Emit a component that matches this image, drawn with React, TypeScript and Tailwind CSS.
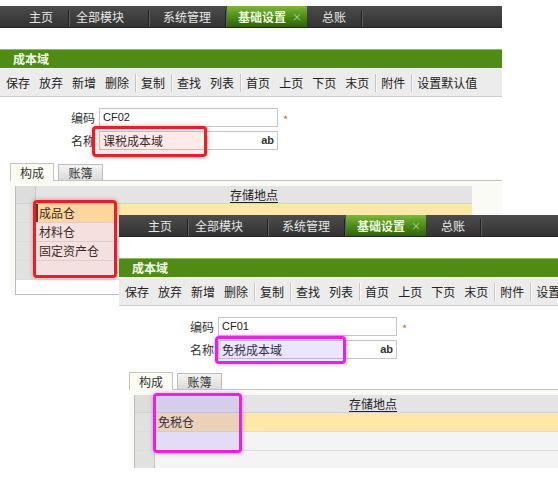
import React from "react";

type Box = { left: number; top: number; width: number; height: number; kind: "red" | "magenta" };

function NavSep() {
  return <div className="w-[2px] h-[17px] self-end border-l border-[#202020] border-r border-r-[#5e5e5e]" />;
}

function NavBar() {
  return (
    <div className="flex h-[22px] items-stretch bg-gradient-to-b from-[#4c4c4c] to-[#333333] border-b border-[#242424] text-[12px] leading-none text-[#e6e6e6]">
      <div className="flex w-[68px] items-center pl-[29px]">主页</div>
      <NavSep />
      <div className="flex w-[78px] items-center pl-[6px]">全部模块</div>
      <NavSep />
      <div className="flex w-[75px] items-center pl-[13px]">系统管理</div>
      <NavSep />
      <div className="flex w-[80px] items-center pl-[11px] bg-gradient-to-b from-[#7cb83c] via-[#4f8d18] to-[#2e620a] font-bold text-[#eef8dc]">
        基础设置
        <span className="ml-[6px] text-[10px] font-normal text-[#b9d996]">×</span>
      </div>
      <div className="flex w-[54px] items-center pl-[15px]">总账</div>
      <NavSep />
    </div>
  );
}

function ToolSep() {
  return <div className="mx-[1px] h-[18px] w-px bg-[#c6c6c6] shadow-[1px_0_0_#fafafa]" />;
}

function Toolbar() {
  const groups = [["保存", "放弃", "新增", "删除"], ["复制"], ["查找", "列表"], ["首页", "上页", "下页", "末页"], ["附件"], ["设置默认值"]];
  return (
    <div className="flex h-[29px] items-center bg-[#ececec] border-t border-[#f6f6f6] border-b border-b-[#cdcdcd] pl-[1.5px] text-[12px] leading-none text-[#222]">
      {groups.map((g, gi) => (
        <React.Fragment key={gi}>
          {gi > 0 && <ToolSep />}
          {g.map((t) => (
            <div key={t} className="px-[4.5px]">
              {t}
            </div>
          ))}
        </React.Fragment>
      ))}
    </div>
  );
}

function Panel({
  code,
  name,
  rows,
  boxes,
  cursor,
}: {
  code: string;
  name: string;
  rows: string[];
  boxes: Box[];
  cursor?: boolean;
}) {
  return (
    <div className="relative w-[502px] pt-[6px]">
      <div className="bg-white">
        <NavBar />
        <div className="mt-[21px] flex h-[19px] items-center border-t border-[#8dbd58] bg-[#4f8c15] pl-[13px] text-[12px] font-bold leading-none text-[#f4faea]">
          成本域
        </div>
        <Toolbar />
        <div className="flex flex-col gap-[4px] pt-[11px] text-[12px] text-[#333]">
          <div className="flex h-[19px] items-center">
            <div className="w-[95px] text-right leading-none">编码</div>
            <div className="ml-[4px] flex h-[19px] w-[179px] items-center border border-[#c6c6c6] bg-white px-[3px] font-['Liberation_Sans',sans-serif] text-[11px] text-[#222]">
              {code}
            </div>
            <div className="ml-[5px] mt-[4px] text-[11px] leading-none text-[#e2601e]">*</div>
          </div>
          <div className="flex h-[19px] items-center">
            <div className="w-[95px] text-right leading-none">名称</div>
            <div className="ml-[4px] flex h-[19px] w-[179px] items-center border border-[#c6c6c6] bg-white px-[3px] text-[12px] text-[#222]">
              <span className="leading-none">{name}</span>
              <span className="ml-auto font-['Liberation_Sans',sans-serif] text-[11px] font-bold leading-none text-[#333]">ab</span>
            </div>
          </div>
        </div>
        <div className="mt-[12px] flex h-[18px] items-end gap-[4px] pl-[10px] text-[12px] leading-none text-[#333]">
          <div className="relative z-10 -mb-px flex h-[18px] w-[44px] items-center justify-center border border-b-0 border-[#c2c2c2] bg-[#fcfcf3]">
            构成
          </div>
          <div className="flex h-[16px] w-[45px] items-center justify-center border border-b-0 border-[#bdbdbd] bg-gradient-to-b from-[#f4f4f4] to-[#dadada]">
            账簿
          </div>
        </div>
        <div className="ml-[10px] h-[115px] border-t border-[#c4c4c4] bg-[#fbfbf6] pl-[5px] pt-[5px]">
          <div className="h-[109px] w-[457px] border-b border-l border-[#bcbcbc] bg-white text-[12px] leading-none text-[#222]">
            <div className="flex h-[18px] border-b border-[#d2d2d2] bg-[#e4e4e4]">
              <div className="w-[20px] border-r border-[#c8c8c8] bg-[#dddddd]" />
              <div className="flex flex-1 items-center justify-center">
                <span className="underline underline-offset-2">存储地点</span>
              </div>
            </div>
            {rows.map((r, i) => (
              <div key={i} className="flex h-[19px] border-b border-[#dddddd]">
                <div className="w-[20px] border-r border-[#c8c8c8] bg-[#e1e1e1]" />
                <div
                  className={
                    i === 0
                      ? "flex flex-1 items-center bg-[#fde7a9] pl-[3px]"
                      : "flex flex-1 items-center bg-[#f4f4f4] pl-[3px]"
                  }
                >
                  {i === 0 && cursor && <div className="-ml-[3px] mr-[1px] h-full w-[2px] bg-[#4a3418]" />}
                  {r}
                </div>
              </div>
            ))}
          </div>
        </div>
      </div>
      {boxes.map((b, i) => (
        <div
          key={i}
          className={
            b.kind === "red"
              ? "absolute rounded-[4px] border-[3px] border-[#e1222c] bg-[rgba(255,90,90,0.13)] shadow-[0_0_4px_rgba(220,30,30,0.45)]"
              : "absolute rounded-[4px] border-[3px] border-[#e424e0] bg-[rgba(140,100,255,0.17)] shadow-[0_0_4px_rgba(220,40,220,0.5)]"
          }
          style={{ left: b.left, top: b.top, width: b.width, height: b.height }}
        />
      ))}
    </div>
  );
}

export default function App() {
  return (
    <div className="relative h-[477px] w-[558px] overflow-hidden bg-white font-['Noto_Sans_CJK_SC','Noto_Sans',sans-serif]">
      <Panel
        code="CF02"
        name="课税成本域"
        rows={["成品仓", "材料仓", "固定资产仓", ""]}
        cursor
        boxes={[
          { left: 92, top: 126, width: 115, height: 31, kind: "red" },
          { left: 33, top: 200, width: 84, height: 78, kind: "red" },
        ]}
      />
      <div className="absolute left-[119px] top-[209px] h-[259px] w-[502px] overflow-hidden">
        <Panel
          code="CF01"
          name="免税成本域"
          rows={["免税仓", "", "", ""]}
          boxes={[
            { left: 96, top: 127, width: 131, height: 28, kind: "magenta" },
            { left: 34, top: 184, width: 89, height: 60, kind: "magenta" },
          ]}
        />
      </div>
    </div>
  );
}
